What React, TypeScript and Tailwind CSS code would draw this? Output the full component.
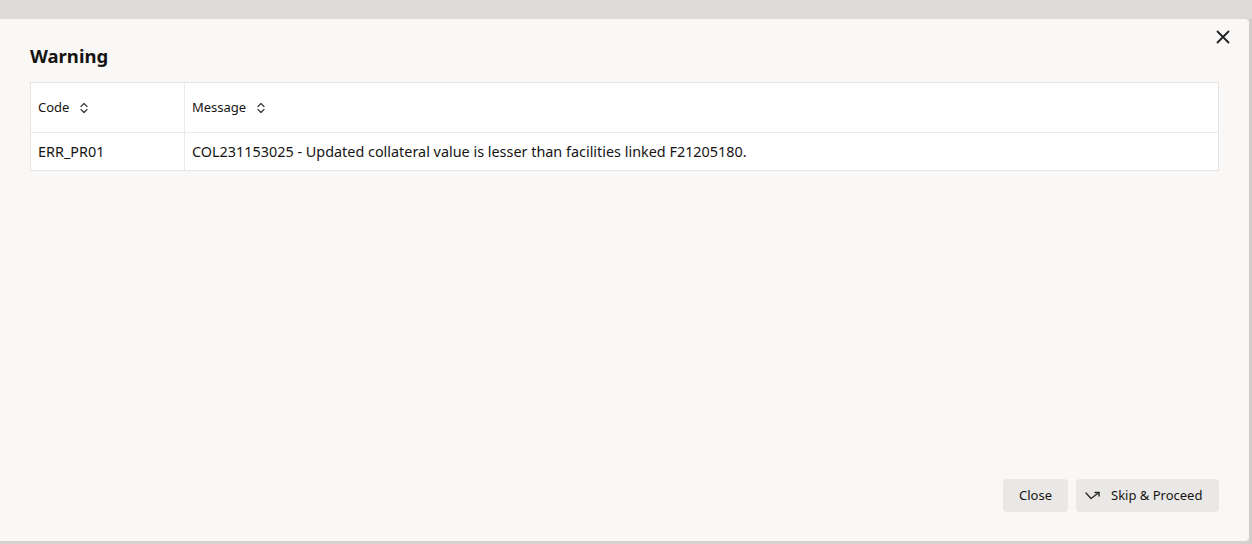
import React from "react";

const SortIcon = () => (
  <svg width="10" height="12" viewBox="0 0 10 12" fill="none" stroke="#3a3a3a" strokeWidth="1.2" strokeLinecap="round" strokeLinejoin="round">
    <path d="M2 4.5 L5 1.5 L8 4.5" />
    <path d="M2 7.5 L5 10.5 L8 7.5" />
  </svg>
);

export default function App() {
  return (
    <div className="w-[1252px] h-[544px] bg-[#d4d3d1] flex flex-col overflow-hidden" style={{ fontFamily: '"Noto Sans", "Open Sans", sans-serif' }}>
      <div className="h-[19px] bg-[#dcdbd9]" />
      <div className="flex flex-1 min-h-0">
        <div className="w-[1249px] h-[522px] bg-[#f9f8f6] rounded-r-[4px] relative flex flex-col px-[30px]">
          <button className="absolute right-[16px] top-[8px] w-[20px] h-[20px] flex items-center justify-center">
            <svg width="14" height="14" viewBox="0 0 14 14" stroke="#1f1f1f" strokeWidth="1.8" strokeLinecap="round">
              <path d="M1.5 1.5 L12.5 12.5 M12.5 1.5 L1.5 12.5" />
            </svg>
          </button>
          <div className="pt-[25px] h-[63px] text-[18.5px] font-bold text-[#161513] leading-[24px]">Warning</div>
          <div className="w-[1189px] bg-white border border-[#e6e5e3] text-[#161513]">
            <div className="flex h-[50px] border-b border-[#eceae8] text-[13px]">
              <div className="w-[154px] border-r border-[#eceae8] flex items-center pl-[7px] gap-[10px]">
                <span>Code</span>
                <SortIcon />
              </div>
              <div className="flex-1 flex items-center pl-[7px] gap-[10px]">
                <span>Message</span>
                <SortIcon />
              </div>
            </div>
            <div className="flex h-[37px] text-[14.4px]">
              <div className="w-[154px] border-r border-[#eceae8] flex items-center pl-[7px]">ERR_PR01</div>
              <div className="flex-1 flex items-center pl-[7px]">COL231153025 - Updated collateral value is lesser than facilities linked F21205180.</div>
            </div>
          </div>
          <div className="flex-1" />
          <div className="flex justify-end gap-[8px] pb-[29px] pr-[0px]">
            <button className="h-[33px] w-[65px] rounded-[4px] bg-[#e9e8e6] text-[13px] text-[#161513]">Close</button>
            <button className="h-[33px] w-[143px] rounded-[4px] bg-[#e9e8e6] text-[13px] text-[#161513] flex items-center pl-[9px] gap-[8px]">
              <svg width="18" height="10" viewBox="0 0 18 10" fill="none" stroke="#2a2a2a" strokeWidth="1.4" strokeLinecap="round" strokeLinejoin="round">
                <path d="M1 2 L6 7.5 L14 1.5" />
                <path d="M10 1.5 L14 1.5 L14 5" />
              </svg>
              <span>Skip &amp; Proceed</span>
            </button>
          </div>
        </div>
        <div className="flex-1 bg-[#cfcecc]" />
      </div>
    </div>
  );
}
